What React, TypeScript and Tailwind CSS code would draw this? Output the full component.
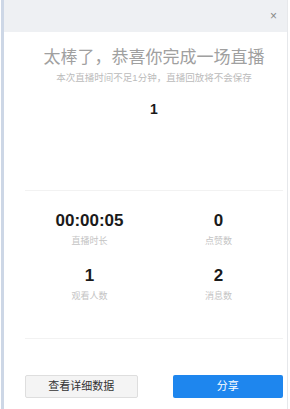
const font = { fontFamily: '"Liberation Sans", "Noto Sans CJK SC", sans-serif' };

const Stat = ({ value, label }: { value: string; label: string }) => (
  <div className="flex flex-col items-center">
    <div className="text-[17px] leading-[20px] font-bold text-[#1a1a1a]">{value}</div>
    <div className="mt-[3px] text-[9px] leading-[14px] text-[#c4c4c4]">{label}</div>
  </div>
);

export default function App() {
  return (
    <div className="w-[290px] h-[409px] bg-white flex" style={font}>
      <div className="ml-[1px] w-[3px] bg-[#cdd7e6]" />
      <div className="flex-1 flex flex-col border-r border-[#e6e8eb] mr-[2px]">
        <div className="h-[32px] bg-[#eef0f3] flex items-center justify-end pr-[10px]">
          <span className="text-[12px] text-[#888] leading-none">×</span>
        </div>
        <div className="flex-1 flex flex-col pl-[21px] pr-[4px]">
          <div className="mt-[16px] text-center text-[17px] leading-[20px] text-[#a0a0a0]">
            太棒了，恭喜你完成一场直播
          </div>
          <div className="mt-[3px] text-center text-[9.5px] leading-[14px] text-[#bbbbbb]">
            本次直播时间不足1分钟，直播回放将不会保存
          </div>
          <div className="mt-[15px] text-center text-[14px] leading-[18px] font-bold text-[#1a1a1a]">1</div>
          <div className="mt-[72px] h-px bg-[#f2f2f2]" />
          <div className="mt-[20px] grid grid-cols-2">
            <Stat value="00:00:05" label="直播时长" />
            <Stat value="0" label="点赞数" />
          </div>
          <div className="mt-[18px] grid grid-cols-2">
            <Stat value="1" label="观看人数" />
            <Stat value="2" label="消息数" />
          </div>
          <div className="mt-[35px] h-px bg-[#f2f2f2]" />
          <div className="mt-[36px] flex justify-between gap-[35px]">
            <button className="flex-1 h-[23px] bg-[#f4f4f4] border border-[#dedede] rounded-[2px] text-[11px] text-[#333]">
              查看详细数据
            </button>
            <button className="flex-1 h-[23px] bg-[#1e86ee] rounded-[2px] text-[11px] text-white">
              分享
            </button>
          </div>
        </div>
      </div>
    </div>
  );
}
